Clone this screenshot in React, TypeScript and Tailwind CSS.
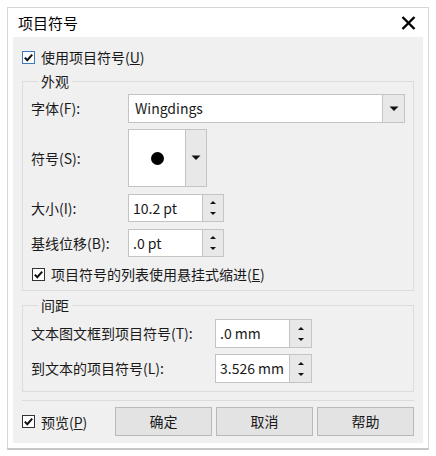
import React from "react";

function Check({ blue = false }: { blue?: boolean }) {
  return (
    <span
      className={`flex h-[13px] w-[13px] shrink-0 items-center justify-center bg-white border ${
        blue ? "border-[#3d7ab8]" : "border-[#333333]"
      }`}>
      <svg width="11" height="11" viewBox="0 0 11 11">
        <polyline points="1.8,5.6 4.3,8.2 9.2,2.6" fill="none" stroke="#111" strokeWidth="2" />
      </svg>
    </span>
  );
}

function Spin({ value, w, inner, h }: { value: string; w: string; inner: string; h: string }) {
  return (
    <div className={`flex ${w} ${h} border border-[#c4c4c4] bg-white`}>
      <div className={`${inner} flex items-center pl-[4px] text-[14px] text-[#1a1a1a]`}>{value}</div>
      <div className="flex flex-1 items-center justify-center border-l border-[#c4c4c4] bg-[#e8e8e8]">
        <svg width="8" height="22" viewBox="0 0 8 22">
          <polygon points="1,7 7,7 4,4" fill="#111" />
          <polygon points="1,15 7,15 4,18" fill="#111" />
        </svg>
      </div>
    </div>
  );
}

function Arrow() {
  return (
    <svg width="10" height="6" viewBox="0 0 10 6">
      <polygon points="0.5,0.5 9.5,0.5 5,5" fill="#111" />
    </svg>
  );
}

export default function App() {
  return (
    <div className="w-[436px] h-[456px] bg-white pt-[7px] pl-[7px] font-['Noto_Sans_CJK_SC',sans-serif] text-[#1a1a1a]">
      <div className="w-[422px] h-[443px] border border-[#d6d6d6] border-b-2 border-b-[#c6c6c6] bg-white">
        {/* title bar */}
        <div className="flex h-[29px] items-center justify-between pl-[10px] pr-[12px]">
          <span className="text-[15px] leading-[18px] text-black">项目符号</span>
          <svg width="15" height="14" viewBox="0 0 15 14">
            <path d="M1.5 1 L13.5 13 M13.5 1 L1.5 13" stroke="#000" strokeWidth="2.4" />
          </svg>
        </div>

        <div className="mx-[5px] h-[406px] bg-[#f0f0f0] px-[9px] pt-[13px] text-[14px]">
          <label className="flex h-[14px] items-center gap-[6px] leading-[14px]">
            <Check blue />
            <span>
              使用项目符号(<span className="underline">U</span>)
            </span>
          </label>

          {/* 外观 */}
          <fieldset className="mt-[9px] border border-[#dcdcdc] px-[8px] pb-[9px]">
            <legend className="ml-[7px] px-[3px] text-[14px] leading-[16px]">外观</legend>
            <div className="mt-[5px] flex items-center">
              <span className="w-[97px]">字体(F):</span>
              <div className="flex h-[29px] w-[277px] border border-[#c4c4c4] bg-white">
                <div className="flex flex-1 items-center pl-[6px]">Wingdings</div>
                <div className="flex w-[22px] items-center justify-center border-l border-[#c4c4c4] bg-[#e8e8e8]">
                  <Arrow />
                </div>
              </div>
            </div>
            <div className="mt-[6px] flex items-center">
              <span className="w-[97px]">符号(S):</span>
              <div className="flex h-[58px] w-[79px] border border-[#c4c4c4] bg-white">
                <div className="flex w-[56px] items-center justify-center">
                  <span className="block h-[13px] w-[13px] rounded-full bg-black" />
                </div>
                <div className="flex flex-1 items-center justify-center border-l border-[#c4c4c4] bg-[#e8e8e8]">
                  <Arrow />
                </div>
              </div>
            </div>
            <div className="mt-[7px] flex items-center">
              <span className="w-[97px]">大小(I):</span>
              <Spin value="10.2 pt" w="w-[96px]" inner="w-[73px]" h="h-[28px]" />
            </div>
            <div className="mt-[7px] flex items-center">
              <span className="w-[97px]">基线位移(B):</span>
              <Spin value=".0 pt" w="w-[96px]" inner="w-[73px]" h="h-[28px]" />
            </div>
            <label className="mt-[10px] flex h-[14px] items-center gap-[6px] pl-[1px] leading-[14px]">
              <Check />
              <span>
                项目符号的列表使用悬挂式缩进(<span className="underline">E</span>)
              </span>
            </label>
          </fieldset>

          {/* 间距 */}
          <fieldset className="mt-[6px] border border-[#dcdcdc] px-[8px] pb-[8px]">
            <legend className="ml-[7px] px-[3px] text-[14px] leading-[16px]">间距</legend>
            <div className="mt-[6px] flex items-center">
              <span className="w-[184px]">文本图文框到项目符号(T):</span>
              <Spin value=".0 mm" w="w-[97px]" inner="w-[73px]" h="h-[29px]" />
            </div>
            <div className="mt-[6px] flex items-center">
              <span className="w-[184px]">到文本的项目符号(L):</span>
              <Spin value="3.526 mm" w="w-[97px]" inner="w-[73px]" h="h-[29px]" />
            </div>
          </fieldset>

          <div className="mt-[8px] h-px bg-[#dcdcdc]" />

          <div className="mt-[6px] flex h-[29px] items-center">
            <label className="flex w-[93px] items-center gap-[6px] leading-[14px]">
              <Check />
              <span>
                预览(<span className="underline">P</span>)
              </span>
            </label>
            <div className="flex gap-[4px]">
              {["确定", "取消", "帮助"].map((t) => (
                <button
                  key={t}
                  className="h-[29px] w-[97px] border border-[#b9b9b9] bg-[#e3e3e3] text-[14px] text-[#1a1a1a]">
                  {t}
                </button>
              ))}
            </div>
          </div>
        </div>
      </div>
    </div>
  );
}
